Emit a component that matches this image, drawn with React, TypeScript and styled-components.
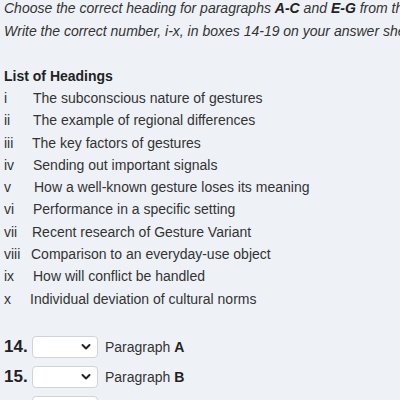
import React from "react";
import styled, { createGlobalStyle } from "styled-components";

const Global = createGlobalStyle`
  html, body { margin: 0; padding: 0; background: #eef2f6; }
  body { font-family: "Liberation Sans", Arial, sans-serif; color: #333; }
`;

const Page = styled.div`
  margin-top: -3px;
  padding: 0 0 0 4px;
  width: 396px;
  overflow: hidden;
  white-space: nowrap;
`;

const Instructions = styled.div`
  font-size: 14px;
  font-style: italic;
  line-height: 23px;
  margin-bottom: 22px;
  color: #333;
  b { color: #222; }
`;

const ListTitle = styled.div`
  font-weight: bold;
  font-size: 14px;
  line-height: 22px;
  color: #222;
`;

const HeadingList = styled.div`
  display: flex;
  flex-direction: column;
  font-size: 14px;
  line-height: 22.3px;
`;

const HeadingRow = styled.div`
  display: flex;
`;

const Numeral = styled.span<{ $w: number }>`
  width: ${(p) => p.$w}px;
  flex-shrink: 0;
`;

const Questions = styled.div`
  margin-top: 26px;
  display: flex;
  flex-direction: column;
  gap: 8px;
`;

const QRow = styled.div`
  display: flex;
  align-items: center;
  height: 22px;
`;

const QNum = styled.span`
  font-size: 17px;
  font-weight: bold;
  color: #222;
  width: 28px;
`;

const Select = styled.div`
  width: 58px;
  height: 20px;
  background: #fff;
  border: 1px solid #cfd4da;
  border-radius: 4px;
  display: flex;
  align-items: center;
  justify-content: flex-end;
  padding-right: 6px;
  box-sizing: content-box;
  margin-right: 7px;
`;

const QLabel = styled.span`
  font-size: 14px;
  b { color: #222; }
`;

const headings: [string, number, string][] = [
  ["i", 29, "The subconscious nature of gestures"],
  ["ii", 29, "The example of regional differences"],
  ["iii", 28, "The key factors of gestures"],
  ["iv", 29, "Sending out important signals"],
  ["v", 30, "How a well-known gesture loses its meaning"],
  ["vi", 29, "Performance in a specific setting"],
  ["vii", 28, "Recent research of Gesture Variant"],
  ["viii", 27, "Comparison to an everyday-use object"],
  ["ix", 29, "How will conflict be handled"],
  ["x", 26, "Individual deviation of cultural norms"],
];

const Chevron = () => (
  <svg width="10" height="8" viewBox="0 0 10 8">
    <path d="M1.5 2 L5 5.5 L8.5 2" fill="none" stroke="#222" strokeWidth="2" strokeLinecap="round" strokeLinejoin="round" />
  </svg>
);

export default function App() {
  return (
    <>
      <Global />
      <Page>
        <Instructions>
          <div>
            Choose the correct heading for paragraphs <b>A-C</b> and <b>E-G</b> from the list of headings below.
          </div>
          <div>Write the correct number, i-x, in boxes 14-19 on your answer sheet.</div>
        </Instructions>
        <ListTitle>List of Headings</ListTitle>
        <HeadingList>
          {headings.map(([n, w, t]) => (
            <HeadingRow key={n}>
              <Numeral $w={w}>{n}</Numeral>
              <span>{t}</span>
            </HeadingRow>
          ))}
        </HeadingList>
        <Questions>
          {["A", "B", "C"].map((p, i) => (
            <QRow key={p}>
              <QNum>{14 + i}.</QNum>
              <Select>
                <Chevron />
              </Select>
              <QLabel>
                Paragraph <b>{p}</b>
              </QLabel>
            </QRow>
          ))}
        </Questions>
      </Page>
    </>
  );
}
